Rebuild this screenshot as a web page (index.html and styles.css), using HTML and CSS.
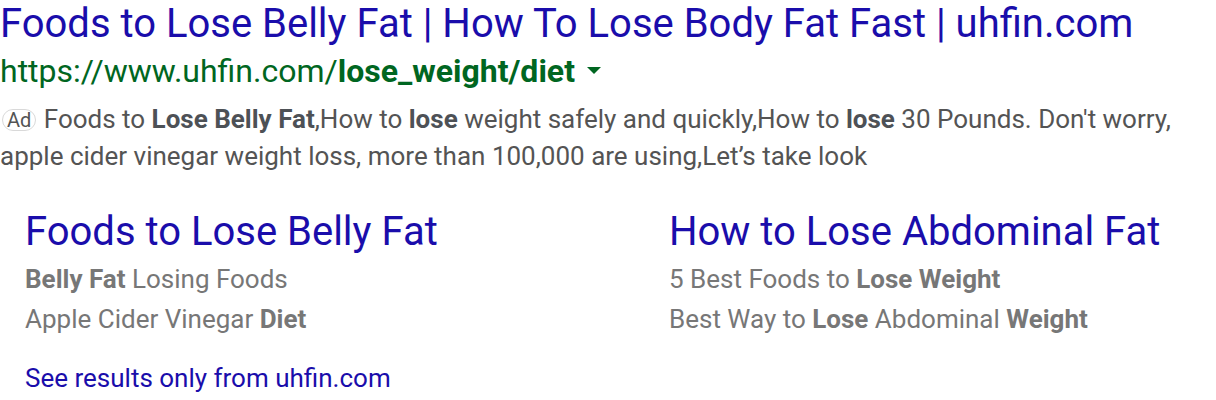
FILE: index.html
```html
<!DOCTYPE html>
<html>
<head>
<meta charset="utf-8">
<link rel="stylesheet" href="styles.css">
</head>
<body>
<div class="ad">
  <a class="title" href="#">Foods to Lose Belly Fat | How To Lose Body Fat Fast | uhfin.com</a>
  <div class="url">https://www.uhfin.com/<b>lose_weight/diet</b><span class="caret"></span></div>
  <div class="desc"><span class="badge">Ad</span> Foods to <b>Lose Belly Fat</b>,How to <b>lose</b> weight safely and quickly,How to <b>lose</b> 30 Pounds. Don't worry, apple cider vinegar weight loss, more than 100,000 are using,Let’s take look</div>
  <div class="sitelinks">
    <div class="sl">
      <a class="sl-title" href="#">Foods to Lose Belly Fat</a>
      <div class="sl-line"><b>Belly Fat</b> Losing Foods</div>
      <div class="sl-line">Apple Cider Vinegar <b>Diet</b></div>
    </div>
    <div class="sl">
      <a class="sl-title" href="#">How to Lose Abdominal Fat</a>
      <div class="sl-line">5 Best Foods to <b>Lose Weight</b></div>
      <div class="sl-line">Best Way to <b>Lose</b> Abdominal <b>Weight</b></div>
    </div>
  </div>
  <a class="more" href="#">See results only from uhfin.com</a>
</div>
</body>
</html>
```
FILE: styles.css
```css
html, body {
  margin: 0;
  padding: 0;
  background: #fff;
}
body {
  font-family: Roboto, "Liberation Sans", Arial, sans-serif;
}
a {
  text-decoration: none;
}
.ad {
  display: flex;
  flex-direction: column;
  align-items: flex-start;
}
.title {
  color: #1a0dab;
  font-size: 40px;
  line-height: 47px;
  white-space: nowrap;
}
.url {
  color: #006621;
  font-size: 32px;
  line-height: 48px;
  white-space: nowrap;
}
.url b {
  font-weight: 700;
}
.caret {
  display: inline-block;
  width: 0;
  height: 0;
  border-left: 7px solid transparent;
  border-right: 7px solid transparent;
  border-top: 7px solid #006621;
  margin-left: 12px;
  vertical-align: 8px;
}
.desc {
  color: #545454;
  font-size: 26px;
  line-height: 37px;
  padding-top: 6px;
}
.desc b {
  font-weight: 700;
  color: #4d5156;
}
.badge {
  display: inline-block;
  font-size: 20px;
  line-height: 20px;
  padding: 0 4px;
  margin-left: 2px;
  margin-right: 1px;
  border: 1px solid #d9d9d9;
  border-radius: 11px;
  color: #545454;
  vertical-align: 1px;
}
.sitelinks {
  display: grid;
  grid-template-columns: 644px 1fr;
  padding-left: 25px;
  margin-top: 33px;
  align-self: stretch;
}
.sl {
  display: flex;
  flex-direction: column;
}
.sl-title {
  color: #1a0dab;
  font-size: 40px;
  line-height: 47px;
  margin-bottom: 4px;
  white-space: nowrap;
}
.sl-line {
  color: #777;
  font-size: 26px;
  line-height: 40px;
  white-space: nowrap;
}
.sl-line b {
  font-weight: 700;
}
.more {
  color: #1a0dab;
  font-size: 26px;
  line-height: 40px;
  margin-left: 25px;
  margin-top: 19px;
}
```
